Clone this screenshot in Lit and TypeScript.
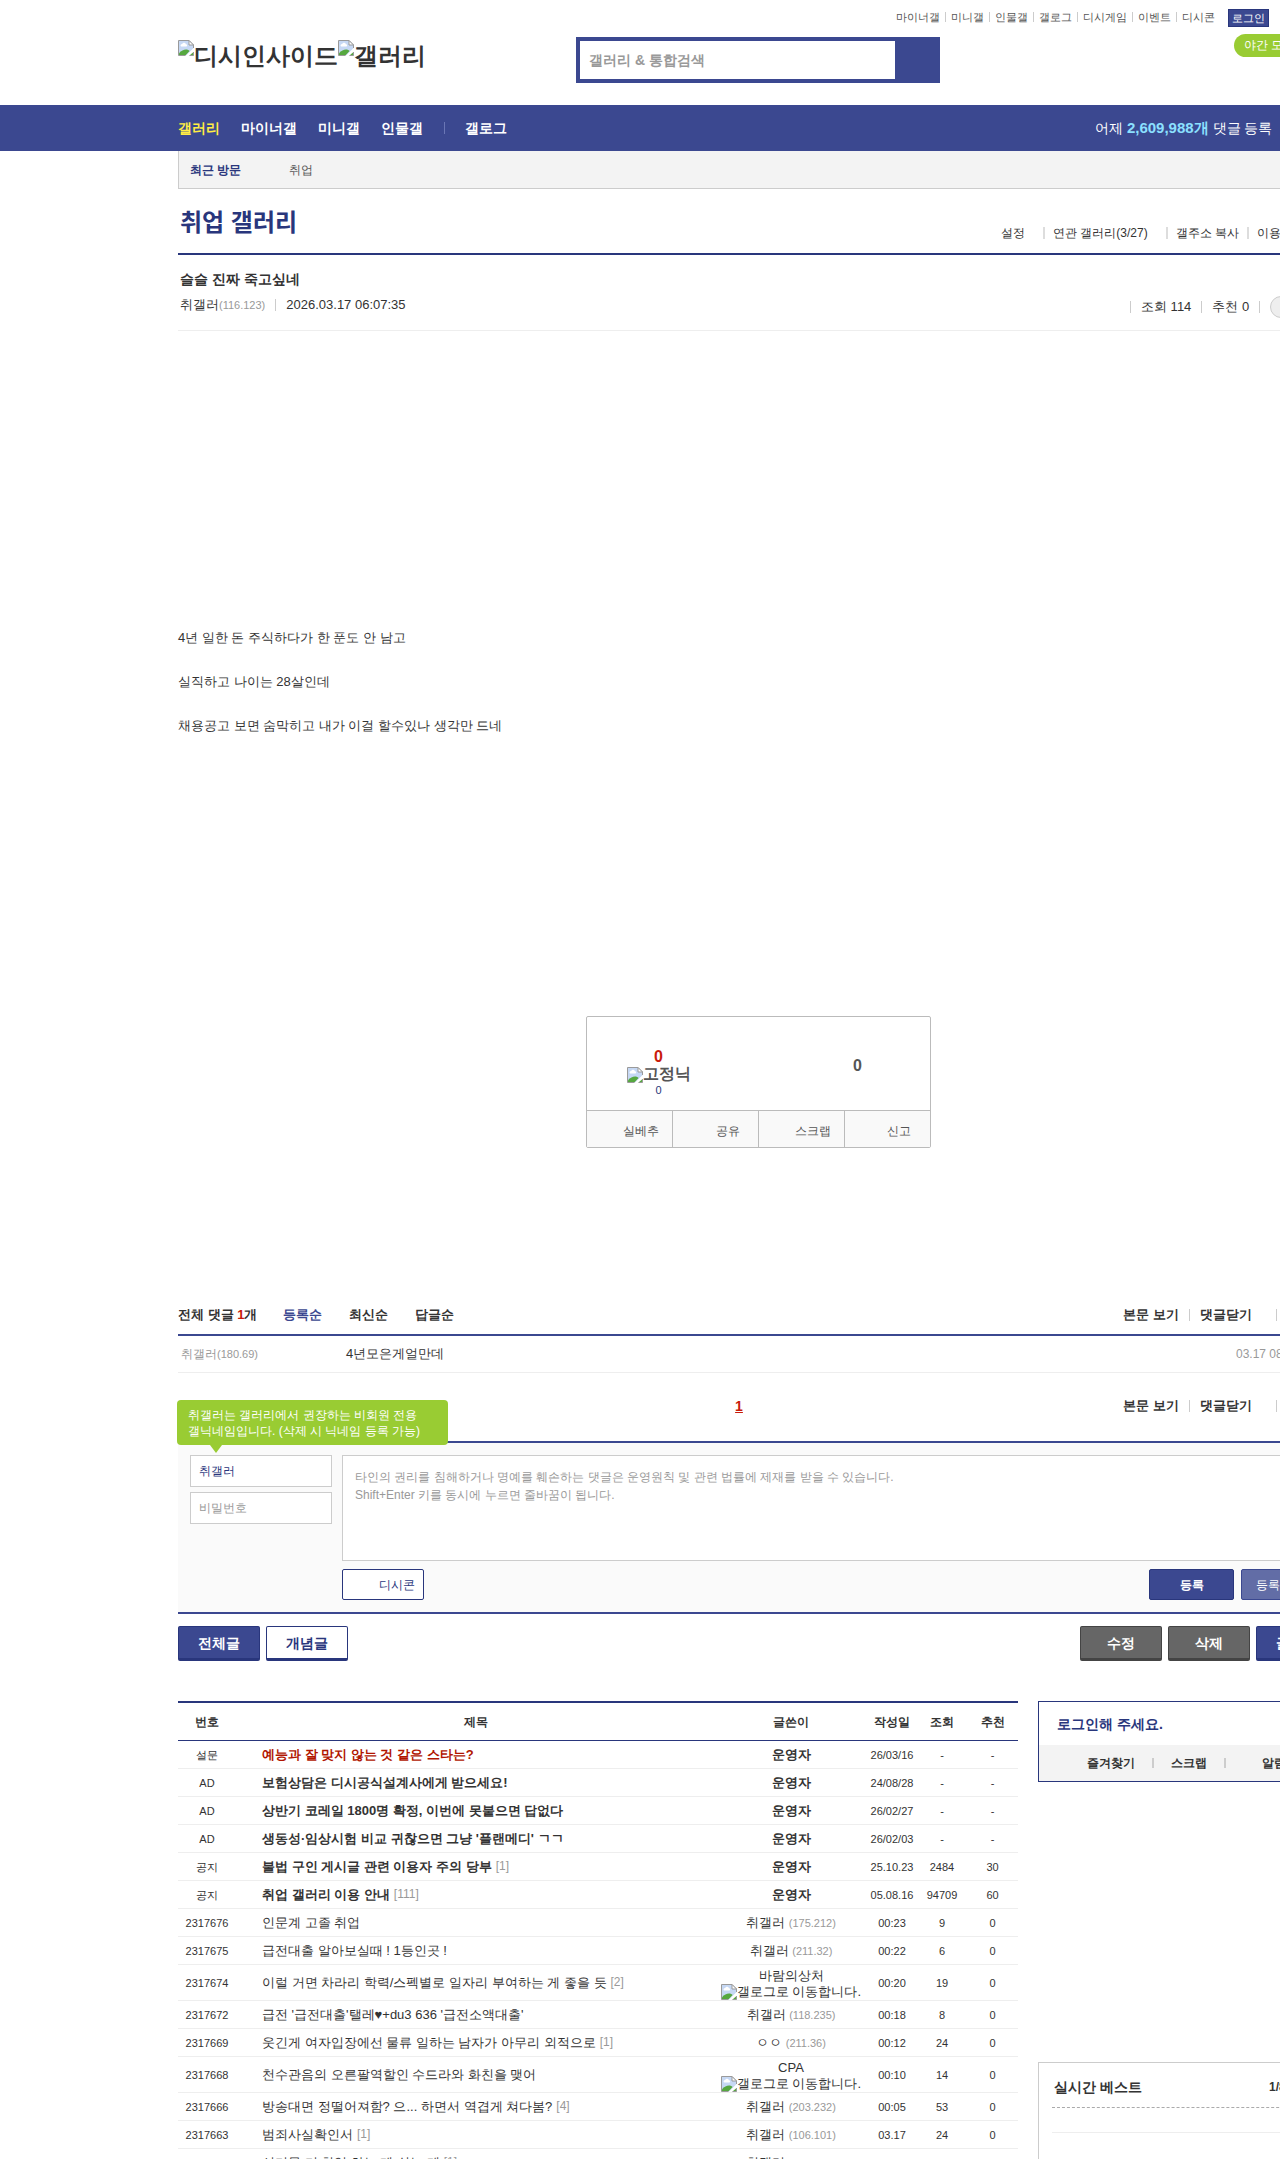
import { LitElement, html, css, svg, nothing } from "lit";
import { customElement } from "lit/decorators.js";

interface Post {
  no: string;
  title: string;
  replies?: string;
  kind?: "survey" | "notice";
  writer: string;
  ip?: string;
  badge?: boolean;
  date: string;
  views: string;
  votes: string;
}

const POSTS: Post[] = [
  { no: "설문", title: "예능과 잘 맞지 않는 것 같은 스타는?", kind: "survey", writer: "운영자", date: "26/03/16", views: "-", votes: "-" },
  { no: "AD", title: "보험상담은 디시공식설계사에게 받으세요!", kind: "notice", writer: "운영자", date: "24/08/28", views: "-", votes: "-" },
  { no: "AD", title: "상반기 코레일 1800명 확정, 이번에 못붙으면 답없다", kind: "notice", writer: "운영자", date: "26/02/27", views: "-", votes: "-" },
  { no: "AD", title: "생동성·임상시험 비교 귀찮으면 그냥 '플랜메디' ㄱㄱ", kind: "notice", writer: "운영자", date: "26/02/03", views: "-", votes: "-" },
  { no: "공지", title: "불법 구인 게시글 관련 이용자 주의 당부", replies: "[1]", kind: "notice", writer: "운영자", date: "25.10.23", views: "2484", votes: "30" },
  { no: "공지", title: "취업 갤러리 이용 안내", replies: "[111]", kind: "notice", writer: "운영자", date: "05.08.16", views: "94709", votes: "60" },
  { no: "2317676", title: "인문계 고졸 취업", writer: "취갤러", ip: "(175.212)", date: "00:23", views: "9", votes: "0" },
  { no: "2317675", title: "급전대출 알아보실때 ! 1등인곳 !", writer: "취갤러", ip: "(211.32)", date: "00:22", views: "6", votes: "0" },
  { no: "2317674", title: "이럴 거면 차라리 학력/스펙별로 일자리 부여하는 게 좋을 듯", replies: "[2]", writer: "바람의상처", badge: true, date: "00:20", views: "19", votes: "0" },
  { no: "2317672", title: "급전 '급전대출'탤레♥+du3 636 '급전소액대출'", writer: "취갤러", ip: "(118.235)", date: "00:18", views: "8", votes: "0" },
  { no: "2317669", title: "웃긴게 여자입장에선 물류 일하는 남자가 아무리 외적으로", replies: "[1]", writer: "ㅇㅇ", ip: "(211.36)", date: "00:12", views: "24", votes: "0" },
  { no: "2317668", title: "천수관음의 오른팔역할인 수드라와 화친을 맺어", writer: "CPA", badge: true, date: "00:10", views: "14", votes: "0" },
  { no: "2317666", title: "방송대면 정떨어져함? 으... 하면서 역겹게 쳐다봄?", replies: "[4]", writer: "취갤러", ip: "(203.232)", date: "00:05", views: "53", votes: "0" },
  { no: "2317663", title: "범죄사실확인서", replies: "[1]", writer: "취갤러", ip: "(106.101)", date: "03.17", views: "24", votes: "0" },
  { no: "2317662", title: "신기물 더 취업 하는 게 쉬는 게", replies: "[1]", writer: "취갤러", ip: "(106.101)", date: "03.17", views: "31", votes: "0" },
];

const TOP_LINKS = ["마이너갤", "미니갤", "인물갤", "갤로그", "디시게임", "이벤트", "디시콘"];

const missing = (alt: string) => html`<span class="missing"
  ><svg viewBox="0 0 16 16" width="16" height="16" aria-hidden="true">
    ${svg`
      <path d="M0.5 0.5H11L15.5 5V9L9 15.5H0.5Z" fill="#c6d8f4"/>
      <path d="M2.5 5.6a1.6 1.6 0 0 1 1.7-1.6a2 2 0 0 1 3.7 0.2a1.2 1.2 0 0 1 0.6 2.3H3.2a0.9 0.9 0 0 1-0.7-0.9Z" fill="#fff"/>
      <path d="M1 15V13.2C3.2 11 5.6 9.6 8 9.6c1.6 0 2.6 0.5 3.6 1.5L7.8 15Z" fill="#56a83f"/>
      <path d="M7.6 16L15.9 7.7V11L11 16Z" fill="#fff"/>
      <path d="M11.5 15.5H15.5V12Z" fill="#56a83f"/>
      <path d="M7.5 15.5H0.5V0.5H11L15.5 5V8M15.5 12V15.5H11.5" fill="none" stroke="#9a9a9a"/>
      <path d="M11 0.5V5H15.5Z" fill="#fff" stroke="#9a9a9a"/>
    `}</svg
  ><span>${alt}</span></span
>`;

@customElement("app-root")
export class AppRoot extends LitElement {
  static styles = css`
    :host {
      display: block;
      overflow: hidden;
      background: #fff;
      color: #333;
      font-family: "Liberation Sans", sans-serif;
      font-size: 13px;
      line-height: 20px;
    }
    * { box-sizing: border-box; }
    a { color: inherit; text-decoration: none; }
    h1, h2, h3, p, ul { margin: 0; padding: 0; font-size: inherit; font-weight: inherit; }
    button, input, textarea { font: inherit; color: inherit; margin: 0; border-radius: 0; }
    button { cursor: pointer; padding: 0; }
    .page { min-width: 1516px; }
    .wrap { max-width: 1160px; margin: 0 auto; }
    .row { display: flex; align-items: center; }
    .bar { flex: none; width: 1px; height: 12px; background: #ccc; }
    .missing { display: inline-flex; align-items: flex-start; }
    .missing svg { flex: none; }

    .header { height: 105px; padding-top: 9px; }
    .util { justify-content: flex-end; height: 18px; padding-right: 69px; font-size: 11px; line-height: 18px; color: #555; }
    .util .item { display: flex; align-items: center; height: 16px; line-height: 16px; align-self: flex-start; }
    .util .item + .item::before { content: ""; width: 1px; height: 10px; margin: 0 5px; background: #ccc; }
    .login { margin-left: 13px; width: 41px; height: 18px; border: 1px solid #29367c; background: #3b4890; color: #fff; font-size: 11px; line-height: 16px; }
    .brand { display: flex; align-items: flex-start; padding-top: 7px; }
    .logo { flex: 0 0 398px; display: flex; padding-top: 6px; font-size: 24px; font-weight: 700; line-height: 32px; white-space: nowrap; }
    .search { display: flex; flex: 0 0 364px; height: 46px; margin-top: 3px; padding: 4px; background: #3b4890; }
    .search input { width: 315px; border: 0; padding: 0 9px; background: #fff; font-size: 14px; font-weight: 700; outline: 0; }
    .search input::placeholder { color: #999; opacity: 1; }
    .search button { flex: 1; border: 0; background: none; }
    .night { margin-left: auto; height: 23px; padding: 0 10px; border: 0; border-radius: 12px; background: #99cc33; color: #fff; font-size: 12px; line-height: 23px; width: 104px; text-align: left; white-space: nowrap; }

    .nav { background: #3b4890; color: #fff; font-size: 14px; }
    .nav .row { height: 46px; }
    .nav .menu { gap: 21px; font-weight: 700; }
    .nav .menu .on { color: #ffed44; }
    .nav .menu .bar { margin-right: -1px; background: #6a76b5; }
    .stat { margin-left: auto; width: 243px; white-space: nowrap; }
    .stat strong { font-size: 15px; color: #8be0ff; }
    .recent { height: 38px; border: solid #ccc; border-width: 0 0 1px 1px; background: #f3f3f3; padding-left: 11px; font-size: 12px; gap: 48px; }
    .recent strong { color: #29367c; }
    .recent a { color: #555; }

    .gallery { display: flex; align-items: flex-end; justify-content: space-between; height: 66px; border-bottom: 2px solid #29367c; }
    .gallery h2 { padding: 0 0 14px 2px; color: #29367c; font-family: "Liberation Sans", "Noto Sans CJK KR", sans-serif; font-size: 24px; font-weight: 700; line-height: 32px; }
    .tools { padding-bottom: 12px; font-size: 12px; line-height: 16px; width: 337px; gap: 8px; white-space: nowrap; }
    .tools .bar { width: 2px; background: #ddd; }
    .tools .wide { padding-right: 10px; }
    .post { padding: 14px 0 14px 2px; border-bottom: 1px solid #eee; }
    .post h3 { font-size: 14px; font-weight: 700; }
    .meta { margin-top: 5px; }
    .meta .bar { margin: 0 10px; }
    .ip { font-size: 11px; color: #999; }
    .counts { margin-left: auto; width: 208px; white-space: nowrap; padding-top: 2px; margin-bottom: -2px; }
    .counts .bar:first-child { margin-left: 0; }
    .pill { flex: 1; height: 22px; border: 1px solid #ccc; border-radius: 11px; background: #eee; }
    .body { display: grid; gap: 22px; padding: 296px 0 279px; line-height: 22px; }

    .vote { width: 345px; margin: 0 auto; border: 1px solid #bbb; border-radius: 2px; }
    .scores { display: flex; height: 94px; border-bottom: 1px solid #bbb; font-size: 16px; font-weight: 700; color: #555; text-align: center; }
    .up { width: 144px; padding-top: 31px; line-height: 18px; }
    .up .missing { display: flex; justify-content: center; padding-top: 1px; line-height: 14px; }
    .up .red { color: #c91b0b; }
    .up .fixed { font-size: 11px; font-weight: 400; color: #29367c; line-height: 14px; }
    .down { margin-left: auto; width: 144px; padding-top: 40px; line-height: 18px; }
    .acts { display: grid; grid-template-columns: repeat(4, 1fr); background: #f9f9f9; }
    .acts button { height: 36px; border: 0; border-left: 1px solid #bbb; padding: 4px 0 0 24px; background: none; font-size: 12px; color: #555; }
    .acts button:first-child { border-left: 0; }

    .chead { padding-bottom: 8px; margin-top: 156px; border-bottom: 2px solid #3b4890; line-height: 22px; font-weight: 700; }
    .sorts { gap: 27px; }
    .sorts em, .red { font-style: normal; color: #c91b0b; }
    .sorts .on { margin-left: -1px; color: #3b4890; }
    .links { margin-left: auto; width: 215px; font-weight: 700; white-space: nowrap; }
    .links .bar { margin: 0 10px; }
    .links .far { margin-left: 24px; }
    .comment { height: 37px; padding-left: 3px; border-bottom: 1px solid #eee; font-size: 12px; color: #999; }
    .comment .who { width: 165px; }
    .comment p { font-size: 13px; color: #333; }
    .comment time { margin-left: auto; width: 102px; white-space: nowrap; }
    .pager { display: grid; grid-template-columns: 1fr auto 1fr; align-items: center; padding: 23px 0 25px; }
    .pager .cur { grid-column: 2; margin-right: 38px; font-size: 14px; font-weight: 700; text-decoration: underline; }

    .form { position: relative; display: grid; grid-template-columns: 142px 1fr; column-gap: 10px; padding: 12px; border: solid #3b4890; border-width: 2px 0; background: #fafafa; font-size: 12px; }
    .ids { display: grid; gap: 5px; align-content: start; }
    .ids input { width: 100%; height: 32px; border: 1px solid #ccc; padding: 0 8px; background: #fff; color: #29367c; }
    .ids input::placeholder, .memo::placeholder { color: #999; opacity: 1; }
    .memo { display: block; width: 100%; height: 106px; border: 1px solid #ccc; padding: 12px; resize: none; line-height: 18px; }
    .send { display: flex; gap: 7px; margin-top: 8px; }
    .send button { width: 85px; height: 31px; border: 1px solid #29367c; border-radius: 2px; background: #3b4890; color: #fff; }
    .send .con { width: 82px; margin-right: auto; padding-left: 28px; background: #fff; color: #29367c; }
    .send .main { font-weight: 700; }
    .send .soft { background: #626da6; border-color: #3b4890; }
    .tip { position: absolute; left: -1px; top: -43px; width: 271px; padding: 7px 11px 6px; border-radius: 4px; background: #99cc33; color: #fff; line-height: 16px; }
    .tip::after { content: ""; position: absolute; left: 33px; top: 100%; border: solid transparent; border-width: 8px 6px 0; border-top-color: #99cc33; }

    .btns { display: flex; gap: 6px; margin-top: 12px; }
    .btns button { width: 82px; height: 35px; border: 1px solid #29367c; border-bottom-width: 3px; border-radius: 2px; background: #3b4890; color: #fff; font-size: 14px; font-weight: 700; }
    .btns .line { background: #fff; color: #29367c; }
    .btns .grey { background: #666; border-color: #444; }
    .btns .push { margin-left: auto; }

    .cols { display: grid; grid-template-columns: 1fr 300px; gap: 20px; align-items: start; margin-top: 40px; }
    .list { width: 100%; table-layout: fixed; border-collapse: separate; border-spacing: 0; border-top: 2px solid #29367c; text-align: center; font-size: 11px; line-height: 16px; }
    .list th, .list td { padding: 0; white-space: nowrap; }
    .list th { height: 38px; border-bottom: 1px solid #29367c; font-size: 12px; }
    .list td { height: 28px; border-bottom: 1px solid #eee; }
    .list .subject { padding-left: 26px; text-align: left; font-size: 13px; }
    .list .writer { font-size: 13px; }
    .c-no { width: 58px; }
    .c-writer { width: 152px; }
    .c-num { width: 50px; }
    .c-last { width: 51px; }
    .list .tall td { height: 36px; }
    .list .tall .writer { padding-top: 2px; }
    .notice .title, .survey .title, .notice .writer, .survey .writer { font-weight: 700; }
    .survey .title { color: #b11500; }
    .replies { margin-left: 4px; font-size: 12px; color: #999; vertical-align: 1px; line-height: 14px; }
    .name { display: block; line-height: 16px; }
    .name + .missing { display: flex; justify-content: center; line-height: 16px; }

    .side { display: grid; }
    .box { border: 1px solid #29367c; height: 81px; display: grid; grid-template-rows: 43px 1fr; }
    .box strong { padding-left: 18px; line-height: 45px; font-size: 14px; color: #29367c; }
    .quick { padding-left: 48px; background: #f3f3f3; font-size: 12px; font-weight: 700; white-space: nowrap; }
    .quick .bar { width: 2px; height: 10px; margin: 0 17px; }
    .quick a:last-child { margin-left: 19px; }
    .best { margin-top: 280px; height: 114px; border: 1px solid #ccc; border-bottom: 0; padding: 0 13px; }
    .best .row { height: 45px; justify-content: space-between; border-bottom: 1px dashed #aaa; font-size: 14px; font-weight: 700; padding-top: 3px; }
    .best .row span { width: 55px; font-size: 12px; }
    .best .row strong { padding-left: 2px; }
    .best .blank { height: 25px; border-bottom: 1px solid #eee; }
  `;

  private links() {
    return html`<div class="links row">
      <a href="#post">본문 보기</a><span class="bar"></span><a href="#comments">댓글닫기</a><span class="bar far"></span>
    </div>`;
  }

  private post(p: Post) {
    return html`<tr class="${p.kind ?? ""} ${p.badge ? "tall" : ""}">
      <td>${p.no}</td>
      <td class="subject"><a class="title" href="#view">${p.title}</a>${p.replies ? html`<a class="replies" href="#replies">${p.replies}</a>` : nothing}</td>
      <td class="writer">
        ${p.badge ? html`<span class="name">${p.writer}</span>${missing("갤로그로 이동합니다.")}` : p.writer}
        ${p.ip ? html`<span class="ip">${p.ip}</span>` : nothing}
      </td>
      <td>${p.date}</td>
      <td>${p.views}</td>
      <td>${p.votes}</td>
    </tr>`;
  }

  render() {
    return html`<div class="page">
      <header class="wrap header">
        <div class="util row">
          ${TOP_LINKS.map((t) => html`<span class="item"><a href="#top">${t}</a></span>`)}
          <button class="login">로그인</button>
        </div>
        <div class="brand">
          <h1 class="logo">${missing("디시인사이드")}${missing("갤러리")}</h1>
          <form class="search" @submit=${(e: Event) => e.preventDefault()}>
            <input type="text" aria-label="갤러리 & 통합검색" placeholder="갤러리 & 통합검색" />
            <button aria-label="검색"></button>
          </form>
          <button class="night">야간 모드</button>
        </div>
      </header>

      <nav class="nav">
        <div class="wrap row">
          <div class="menu row">
            <a class="on" href="#g">갤러리</a><a href="#m">마이너갤</a><a href="#n">미니갤</a><a href="#p">인물갤</a>
            <span class="bar"></span><a href="#l">갤로그</a>
          </div>
          <div class="stat">어제 <strong>2,609,988개</strong> 댓글 등록</div>
        </div>
      </nav>
      <div class="wrap recent row"><strong>최근 방문</strong><a href="#job">취업</a></div>

      <main class="wrap">
        <div class="gallery">
          <h2>취업 갤러리</h2>
          <div class="tools row">
            <a class="wide" href="#set">설정</a><span class="bar"></span>
            <a class="wide" href="#rel">연관 갤러리(3/27)</a><span class="bar"></span>
            <a href="#copy">갤주소 복사</a><span class="bar"></span>
            <a href="#guide">이용안내</a>
          </div>
        </div>
        <div class="post" id="post">
          <h3>슬슬 진짜 죽고싶네</h3>
          <div class="meta row">
            <span>취갤러<span class="ip">(116.123)</span></span><span class="bar"></span><time>2026.03.17 06:07:35</time>
            <div class="counts row">
              <span class="bar"></span><span>조회 114</span><span class="bar"></span><span>추천 0</span><span class="bar"></span><span class="pill"></span>
            </div>
          </div>
        </div>
        <article class="body">
          <p>4년 일한 돈 주식하다가 한 푼도 안 남고</p>
          <p>실직하고 나이는 28살인데</p>
          <p>채용공고 보면 숨막히고 내가 이걸 할수있나 생각만 드네</p>
        </article>

        <section class="vote">
          <div class="scores">
            <div class="up">
              <div class="red">0</div>
              ${missing("고정닉")}
              <div class="fixed">0</div>
            </div>
            <div class="down">0</div>
          </div>
          <div class="acts"><button>실베추</button><button>공유</button><button>스크랩</button><button>신고</button></div>
        </section>

        <section id="comments">
          <div class="chead row">
            <div class="sorts row">
              <span>전체 댓글 <em>1</em>개</span><a class="on" href="#reg">등록순</a><a href="#new">최신순</a><a href="#re">답글순</a>
            </div>
            ${this.links()}
          </div>
          <div class="comment row">
            <span class="who">취갤러<span class="ip">(180.69)</span></span>
            <p>4년모은게얼만데</p>
            <time>03.17 08:12:40</time>
          </div>
          <div class="pager"><a class="cur red" href="#p1">1</a>${this.links()}</div>
        </section>

        <form class="form" @submit=${(e: Event) => e.preventDefault()}>
          <div class="tip">취갤러는 갤러리에서 권장하는 비회원 전용<br />갤닉네임입니다. (삭제 시 닉네임 등록 가능)</div>
          <div class="ids">
            <input type="text" aria-label="닉네임" .value=${"취갤러"} />
            <input type="password" aria-label="비밀번호" placeholder="비밀번호" autocomplete="off" />
          </div>
          <div>
            <textarea
              class="memo"
              aria-label="댓글 내용"
              placeholder=${"타인의 권리를 침해하거나 명예를 훼손하는 댓글은 운영원칙 및 관련 법률에 제재를 받을 수 있습니다.\nShift+Enter 키를 동시에 누르면 줄바꿈이 됩니다."}
            ></textarea>
            <div class="send">
              <button class="con" type="button">디시콘</button>
              <button class="main">등록</button>
              <button class="soft">등록+추천</button>
            </div>
          </div>
        </form>

        <div class="btns">
          <button>전체글</button><button class="line">개념글</button>
          <button class="grey push">수정</button><button class="grey">삭제</button><button>글쓰기</button>
        </div>

        <div class="cols">
          <table class="list">
            <colgroup>
              <col class="c-no" /><col /><col class="c-writer" /><col class="c-num" /><col class="c-num" /><col class="c-last" />
            </colgroup>
            <thead>
              <tr><th>번호</th><th>제목</th><th>글쓴이</th><th>작성일</th><th>조회</th><th>추천</th></tr>
            </thead>
            <tbody>${POSTS.map((p) => this.post(p))}</tbody>
          </table>
          <aside class="side">
            <div class="box">
              <strong>로그인해 주세요.</strong>
              <div class="quick row">
                <a href="#fav">즐겨찾기</a><span class="bar"></span><a href="#scrap">스크랩</a><span class="bar"></span><a href="#noti">알림</a>
              </div>
            </div>
            <div class="best">
              <div class="row"><strong>실시간 베스트</strong><span>1/8</span></div>
              <div class="blank"></div>
            </div>
          </aside>
        </div>
      </main>
    </div>`;
  }
}
